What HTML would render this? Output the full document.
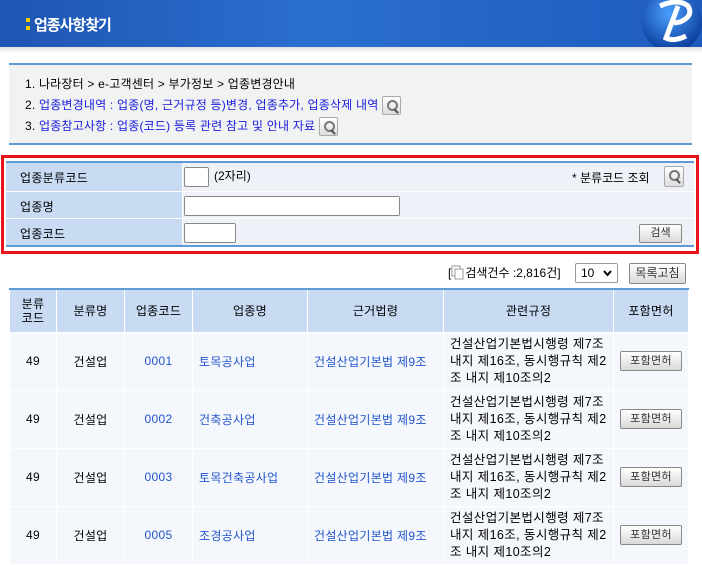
<!DOCTYPE html>
<html><head><meta charset="utf-8">
<style>
*{margin:0;padding:0;box-sizing:border-box}
body{width:702px;height:563px;overflow:hidden;background:#fff;font-family:"Liberation Sans","Noto Sans CJK KR","NanumGothic",sans-serif;font-size:12px;color:#000;position:relative}
.hdr{position:absolute;left:0;top:0;width:702px;height:47px;background:linear-gradient(90deg,#1f55b3 0%,#2a6fd0 45%,#1e5bbf 100%)}
.hdr .bar{position:absolute;left:26px;top:18px;width:4px;height:4px;background:#ffc800;box-shadow:0 8px 0 #ffc800}
.hdr .t{position:absolute;left:34px;top:14px;color:#fff;font-size:15px;font-weight:bold;letter-spacing:-1px}
.shadow{position:absolute;left:0;top:47px;width:702px;height:6px;background:linear-gradient(#e0e0e0,#fff)}
.info{position:absolute;left:9px;top:63px;width:683px;height:82px;background:#f1f3f3;border-top:2px solid #5c9bd6;border-bottom:2px solid #5c9bd6;font-size:12px;letter-spacing:0.2px}
.info div{position:absolute;left:16px}
.blue{color:#1a1adc}
.mag{display:inline-block;width:19px;height:19px;border:1px solid #aaa;background:linear-gradient(#fff,#ddd);vertical-align:middle;position:relative;border-radius:2px}
.mag:before{content:"";position:absolute;left:4px;top:3px;width:7px;height:7px;border:2px solid #777;border-radius:50%}
.mag:after{content:"";position:absolute;left:12px;top:11px;width:2px;height:6px;background:#555;transform:rotate(-45deg)}
.red{position:absolute;left:1px;top:155px;width:698px;height:99px;border:3px solid #e8141c}
.frm{position:absolute;left:6px;top:161px;width:688px;height:86px;border-top:2px solid #5c9bd6;border-bottom:2px solid #5c9bd6;background:#eef2f8}
.frm .row{position:absolute;left:0;width:688px;height:27px;border-bottom:1px solid #fff}
.frm .lab{position:absolute;left:0;top:0;width:177px;height:100%;background:#c8dbf3;border-right:1px solid #fff;padding:6px 0 0 14px;font-size:12px;letter-spacing:0.3px}
.inp{position:absolute;background:#fff;border:1px solid #888;border-radius:2px}
.btn{position:absolute;border:1px solid #888;background:linear-gradient(#fff,#d9d9d9);border-radius:2px;font-size:11px;text-align:center;color:#333}
.cnt{position:absolute;top:264px;left:448px;font-size:12px}
table{position:absolute;left:9px;top:288px;width:680px;border-collapse:collapse;border-top:2px solid #5c9bd6;table-layout:fixed}
th{background:#c8dbf3;height:43px;font-weight:normal;font-size:12px;border-left:1px solid #fff;border-right:1px solid #fff;letter-spacing:0.3px}
td{background:#f4f7fc;height:58px;border:1px solid #fff;text-align:center;font-size:12px;letter-spacing:0.3px}
td.a{color:#2255cc}
td.l{text-align:left;padding-left:6px}
td.r{text-align:left;padding-left:6px;padding-right:4px;line-height:17px;word-break:break-all;font-size:12.5px;letter-spacing:0.4px}
</style></head><body>
<div class="hdr"><div class="bar"></div><div class="t">업종사항찾기</div>
<svg style="position:absolute;left:638px;top:-8px" width="64" height="62"><defs><radialGradient id="g" cx="45%" cy="35%" r="65%"><stop offset="0" stop-color="#4aa0ff"/><stop offset="1" stop-color="#0b3c9a"/></radialGradient></defs><circle cx="34" cy="30" r="30" fill="url(#g)"/><path d="M22 14 Q40 6 50 14 Q56 24 42 30 L36 31 M40 14 L28 46 Q36 50 48 44" stroke="#fff" stroke-width="5" fill="none"/></svg>
</div>
<div class="shadow"></div>
<div class="info">
<div style="top:10px">1. 나라장터 &gt; e-고객센터 &gt; 부가정보 &gt; 업종변경안내</div>
<div style="top:31px">2. <span class="blue">업종변경내역 : 업종(명, 근거규정 등)변경, 업종추가, 업종삭제 내역</span> <span class="mag"></span></div>
<div style="top:52px">3. <span class="blue">업종참고사항 : 업종(코드) 등록 관련 참고 및 안내 자료</span> <span class="mag"></span></div>
</div>
<div class="red"></div>
<div class="frm">
<div class="row" style="top:0;height:29px"><div class="lab">업종분류코드</div>
<div class="inp" style="left:178px;top:4px;width:25px;height:20px"></div><span style="position:absolute;left:208px;top:4px">(2자리)</span>
<span style="position:absolute;left:566px;top:6px">* 분류코드 조회</span><span class="mag" style="position:absolute;left:658px;top:3px;width:20px;height:21px"></span></div>
<div class="row" style="top:29px"><div class="lab">업종명</div><div class="inp" style="left:178px;top:4px;width:216px;height:20px"></div></div>
<div class="row" style="top:56px;height:26px;border:0"><div class="lab">업종코드</div><div class="inp" style="left:178px;top:4px;width:52px;height:20px"></div>
<div class="btn" style="left:633px;top:5px;width:43px;height:19px;line-height:17px">검색</div></div>
</div>
<div class="cnt">[<svg width="14" height="15" style="vertical-align:-3px"><rect x="1" y="1" width="8" height="10" fill="#fff" stroke="#999"/><rect x="4" y="4" width="8" height="10" fill="#fff" stroke="#999"/></svg>검색건수 :2,816건]</div>
<div class="inp" style="left:575px;top:263px;width:43px;height:20px;border-color:#999;font-size:12px;padding:2px 0 0 5px">10 <svg style="position:absolute;right:5px;top:6px" width="9" height="7"><path d="M1 1 L4.5 5 L8 1" stroke="#000" stroke-width="2" fill="none"/></svg></div>
<div class="btn" style="left:629px;top:263px;width:57px;height:21px;line-height:19px;font-size:12px">목록고침</div>
<table>
<col style="width:47px"><col style="width:68px"><col style="width:68px"><col style="width:115px"><col style="width:136px"><col style="width:170px"><col>
<tr><th style="line-height:14px">분류<br>코드</th><th>분류명</th><th>업종코드</th><th>업종명</th><th>근거법령</th><th>관련규정</th><th>포함면허</th></tr>
<tr><td>49</td><td>건설업</td><td class="a">0001</td><td class="a l">토목공사업</td><td class="a l">건설산업기본법 제9조</td><td class="r">건설산업기본법시행령 제7조 내지 제16조, 동시행규칙 제2조 내지 제10조의2</td><td><div class="btn" style="position:relative;width:62px;height:20px;line-height:18px;margin:0 auto">포함면허</div></td></tr>
<tr><td>49</td><td>건설업</td><td class="a">0002</td><td class="a l">건축공사업</td><td class="a l">건설산업기본법 제9조</td><td class="r">건설산업기본법시행령 제7조 내지 제16조, 동시행규칙 제2조 내지 제10조의2</td><td><div class="btn" style="position:relative;width:62px;height:20px;line-height:18px;margin:0 auto">포함면허</div></td></tr>
<tr><td>49</td><td>건설업</td><td class="a">0003</td><td class="a l">토목건축공사업</td><td class="a l">건설산업기본법 제9조</td><td class="r">건설산업기본법시행령 제7조 내지 제16조, 동시행규칙 제2조 내지 제10조의2</td><td><div class="btn" style="position:relative;width:62px;height:20px;line-height:18px;margin:0 auto">포함면허</div></td></tr>
<tr><td>49</td><td>건설업</td><td class="a">0005</td><td class="a l">조경공사업</td><td class="a l">건설산업기본법 제9조</td><td class="r">건설산업기본법시행령 제7조 내지 제16조, 동시행규칙 제2조 내지 제10조의2</td><td><div class="btn" style="position:relative;width:62px;height:20px;line-height:18px;margin:0 auto">포함면허</div></td></tr>
</table>
</body></html>
